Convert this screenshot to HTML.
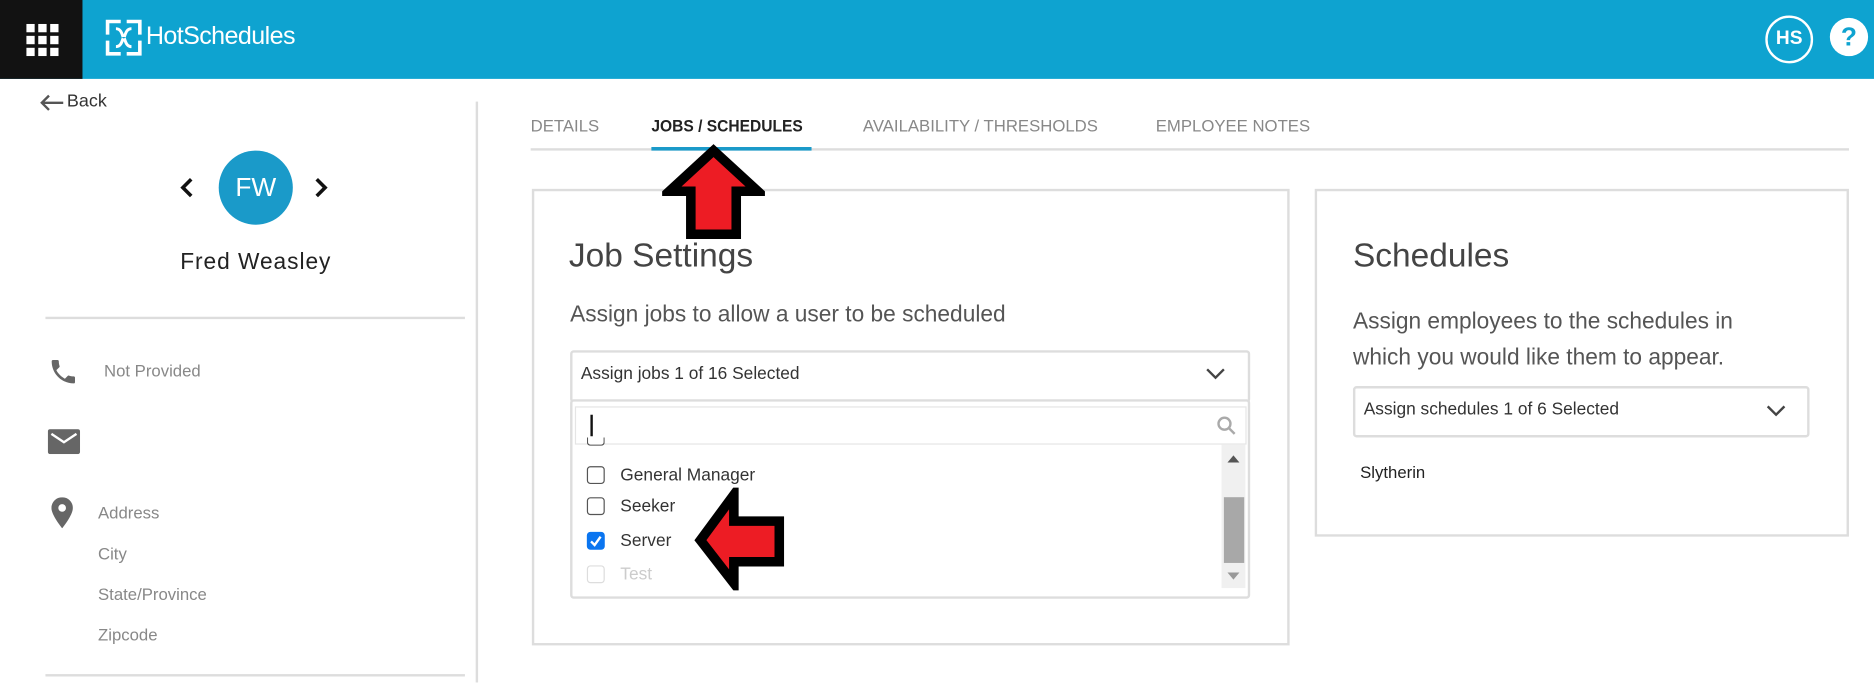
<!DOCTYPE html>
<html><head><meta charset="utf-8"><style>
*{margin:0;padding:0;box-sizing:border-box}
html,body{width:1874px;height:683px;overflow:hidden;background:#fff;font-family:"Liberation Sans",Arial,sans-serif}
#w{position:absolute;left:0;top:0;width:1568px;height:571px;transform:scale(1.1952);transform-origin:0 0}
.a{position:absolute;white-space:nowrap}
.gray{color:#888;font-size:14px}
.cb{position:absolute;width:15px;height:15px;border:1px solid #555;border-radius:3px;background:#fff}
.it{position:absolute;font-size:14.5px;color:#333}
</style></head><body><div id="w">
<div class="a" style="left:0;top:0;width:1568px;height:66px;background:#0ea3d0"></div>
<div class="a" style="left:0;top:0;width:69px;height:66px;background:#121212"></div>
<svg class="a" style="left:22px;top:20px" width="27" height="27" viewBox="0 0 27 27" fill="#fff">
<rect x="0" y="0" width="7" height="7"/><rect x="10" y="0" width="7" height="7"/><rect x="20" y="0" width="7" height="7"/>
<rect x="0" y="10" width="7" height="7"/><rect x="10" y="10" width="7" height="7"/><rect x="20" y="10" width="7" height="7"/>
<rect x="0" y="20" width="7" height="7"/><rect x="10" y="20" width="7" height="7"/><rect x="20" y="20" width="7" height="7"/></svg>
<svg class="a" style="left:88px;top:16px" width="31" height="31" viewBox="0 0 31 31" fill="none" stroke="#fff" stroke-width="3">
<path d="M2 13V2h11M18 2h11v11M29 18v11H18M13 29H2V18"/><path d="M9 8c4 0 5 4 6 7M22 8c-4 0-5 4-6 7M9 23c4 0 5-4 6-7M22 23c-4 0-5-4-6-7" stroke-width="2.5"/></svg>
<div class="a" style="left:122px;top:19px;font-size:21px;color:#fff;letter-spacing:-0.5px">HotSchedules</div>
<div class="a" style="left:1477px;top:13px;width:40px;height:40px;border:2px solid #fff;border-radius:50%;color:#fff;font-weight:bold;font-size:16px;line-height:36px;text-align:center">HS</div>
<div class="a" style="left:1531px;top:15px;width:32px;height:32px;border-radius:50%;background:#fff;color:#0ea3d0;font-weight:bold;font-size:22px;line-height:32px;text-align:center">?</div>

<svg class="a" style="left:33px;top:79px" width="20" height="14" viewBox="0 0 20 14" fill="none" stroke="#555" stroke-width="2"><path d="M20 7H2M8 1L2 7l6 6"/></svg>
<div class="a" style="left:56px;top:76px;font-size:15px;color:#333">Back</div>
<div class="a" style="left:398px;top:85px;width:2px;height:486px;background:#ddd"></div>
<svg class="a" style="left:150px;top:148px" width="12" height="18" viewBox="0 0 12 18" fill="none" stroke="#111" stroke-width="3"><path d="M10 2L3 9l7 7"/></svg>
<svg class="a" style="left:263px;top:148px" width="12" height="18" viewBox="0 0 12 18" fill="none" stroke="#111" stroke-width="3"><path d="M2 2l7 7-7 7"/></svg>
<div class="a" style="left:183px;top:126px;width:62px;height:62px;border-radius:50%;background:#1a9ac9;color:#fff;font-size:22px;line-height:62px;text-align:center">FW</div>
<div class="a" style="left:100px;top:209px;width:228px;text-align:center;font-size:19px;color:#222;letter-spacing:0.8px">Fred Weasley</div>
<div class="a" style="left:38px;top:265px;width:351px;height:2px;background:#ddd"></div>
<div class="a" style="left:38px;top:564px;width:351px;height:2px;background:#ddd"></div>
<svg class="a" style="left:40px;top:298px" width="26" height="26" viewBox="0 0 24 24" fill="#666"><path d="M6.6 10.8c1.4 2.8 3.8 5.1 6.6 6.6l2.2-2.2c.3-.3.7-.4 1-.2 1.1.4 2.3.6 3.6.6.6 0 1 .4 1 1V20c0 .6-.4 1-1 1C10.6 21 3 13.4 3 4c0-.6.4-1 1-1h3.5c.6 0 1 .4 1 1 0 1.3.2 2.5.6 3.6.1.3 0 .7-.2 1z"/></svg>
<div class="a gray" style="left:87px;top:302px">Not Provided</div>
<svg class="a" style="left:40px;top:359px" width="27" height="21" viewBox="0 0 27 21"><rect width="27" height="21" rx="2" fill="#666"/><path d="M3 4l10.5 7L24 4" fill="none" stroke="#fff" stroke-width="2"/></svg>
<svg class="a" style="left:43px;top:416px" width="18" height="26" viewBox="0 0 18 26"><path d="M9 0a9 9 0 0 0-9 9c0 6 9 17 9 17s9-11 9-17a9 9 0 0 0-9-9z" fill="#666"/><circle cx="9" cy="9" r="3.2" fill="#fff"/></svg>
<div class="a gray" style="left:82px;top:421px">Address</div>
<div class="a gray" style="left:82px;top:455px">City</div>
<div class="a gray" style="left:82px;top:489px">State/Province</div>
<div class="a gray" style="left:82px;top:523px">Zipcode</div>

<div class="a" style="left:444px;top:124px;width:1103px;height:2px;background:#ddd"></div>
<div class="a" style="left:545px;top:123px;width:134px;height:3px;background:#1a9ac9"></div>
<div class="a" style="left:444px;top:97px;font-size:14px;color:#888">DETAILS</div>
<div class="a" style="left:545px;top:97px;font-size:14px;color:#222;font-weight:bold;transform:scaleX(0.93);transform-origin:0 0">JOBS / SCHEDULES</div>
<div class="a" style="left:722px;top:97px;font-size:14px;color:#888">AVAILABILITY / THRESHOLDS</div>
<div class="a" style="left:967px;top:97px;font-size:14px;color:#888">EMPLOYEE NOTES</div>

<div class="a" style="left:445px;top:158px;width:634px;height:382px;border:2px solid #ddd"></div>
<div class="a" style="left:476px;top:198px;font-size:28px;color:#444">Job Settings</div>
<div class="a" style="left:477px;top:253px;font-size:19px;color:#555">Assign jobs to allow a user to be scheduled</div>
<div class="a" style="left:477px;top:293px;width:569px;height:44px;border:2px solid #ddd;border-radius:3px"></div>
<div class="a" style="left:486px;top:305px;font-size:14.5px;color:#333">Assign jobs 1 of 16 Selected</div>
<svg class="a" style="left:1009px;top:308px" width="16" height="10" viewBox="0 0 16 10" fill="none" stroke="#444" stroke-width="2"><path d="M1 1l7 7 7-7"/></svg>
<div class="a" style="left:477px;top:334px;width:569px;height:167px;border:2px solid #ddd;border-radius:3px;background:#fff"></div>
<div class="a" style="left:481px;top:340px;width:562px;height:32px;border:1px solid #e5e5e5"></div>
<div class="a" style="left:494px;top:347px;width:2px;height:18px;background:#111"></div>
<svg class="a" style="left:1018px;top:348px" width="16" height="16" viewBox="0 0 16 16" fill="none" stroke="#aaa" stroke-width="2"><circle cx="6.5" cy="6.5" r="5"/><path d="M10 10l5 5"/></svg>
<div class="cb" style="left:491px;top:366px;height:7px;border-top:none;border-radius:0 0 3px 3px"></div>
<div class="cb" style="left:491px;top:390px"></div><div class="it" style="left:519px;top:390px">General Manager</div>
<div class="cb" style="left:491px;top:416px"></div><div class="it" style="left:519px;top:416px">Seeker</div>
<div class="cb" style="left:491px;top:445px;background:#0a75f0;border-color:#0a75f0"><svg width="13" height="13" viewBox="0 0 13 13" style="position:absolute;left:0;top:0"><path d="M2.5 7l3 3 5-7" fill="none" stroke="#fff" stroke-width="2"/></svg></div><div class="it" style="left:519px;top:445px">Server</div>
<div class="cb" style="left:491px;top:473px;border-color:#ddd"></div><div class="it" style="left:519px;top:473px;color:#ccc">Test</div>
<div class="a" style="left:1022px;top:372px;width:20px;height:120px;background:#f0f0f0"></div>
<div class="a" style="left:1024px;top:416px;width:17px;height:55px;background:#a8a8a8"></div>
<svg class="a" style="left:1026px;top:380px" width="12" height="8"><path d="M1 7h10L6 1z" fill="#555"/></svg>
<svg class="a" style="left:1026px;top:478px" width="12" height="8"><path d="M1 1h10L6 7z" fill="#999"/></svg>

<svg class="a" style="left:554px;top:120px" width="86" height="82" viewBox="0 0 86 82"><path d="M43 6L80 40H62v36H24V40H6z" fill="#ed1c24" stroke="#000" stroke-width="8" stroke-linejoin="miter"/></svg>
<svg class="a" style="left:580px;top:408px" width="78" height="86" viewBox="0 0 78 86"><path d="M6 44L34 6v22h38v34H34v18z" fill="#ed1c24" stroke="#000" stroke-width="8"/></svg>

<div class="a" style="left:1100px;top:158px;width:447px;height:291px;border:2px solid #ddd"></div>
<div class="a" style="left:1132px;top:198px;font-size:28px;color:#444">Schedules</div>
<div class="a" style="left:1132px;top:255px;font-size:19px;color:#555;line-height:30px">Assign employees to the schedules in<br>which you would like them to appear.</div>
<div class="a" style="left:1132px;top:323px;width:382px;height:43px;border:2px solid #ddd;border-radius:3px"></div>
<div class="a" style="left:1141px;top:335px;font-size:14.5px;color:#333">Assign schedules 1 of 6 Selected</div>
<svg class="a" style="left:1478px;top:339px" width="16" height="10" viewBox="0 0 16 10" fill="none" stroke="#444" stroke-width="2"><path d="M1 1l7 7 7-7"/></svg>
<div class="a" style="left:1138px;top:387px;font-size:14px;color:#222">Slytherin</div>
</div></body></html>
